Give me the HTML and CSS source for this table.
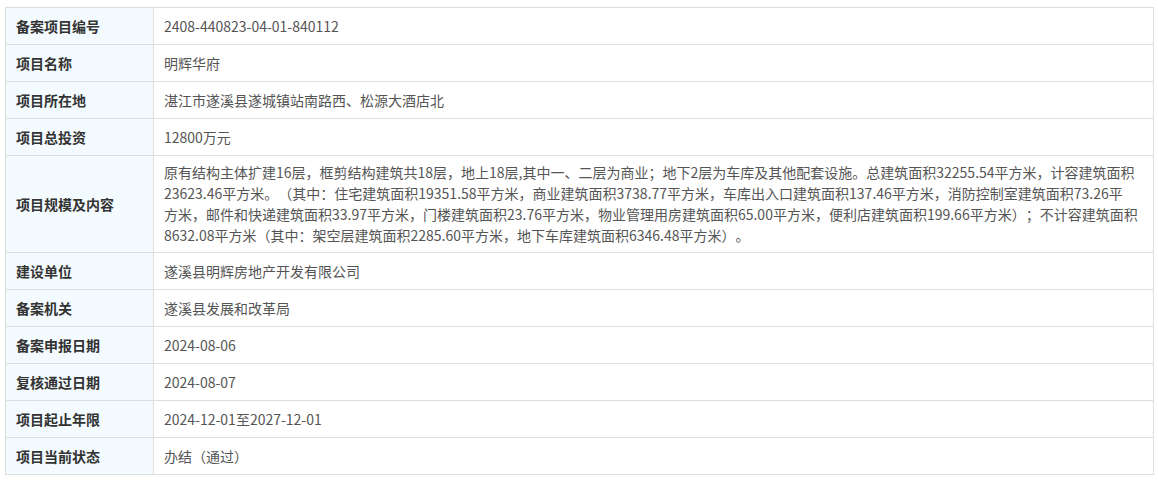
FILE: index.html
```html
<!DOCTYPE html>
<html lang="zh-CN">
<head>
    <meta charset="UTF-8">
    <meta name="viewport" content="width=device-width, initial-scale=1.0">
    <title>备案项目信息</title>
    <link rel="stylesheet" href="styles.css">
</head>
<body>

    <div class="wrap">
        <table class="info-table">
            <tr>
                <th>备案项目编号</th>
                <td>2408-440823-04-01-840112</td>
            </tr>
            <tr>
                <th>项目名称</th>
                <td>明辉华府</td>
            </tr>
            <tr>
                <th>项目所在地</th>
                <td>湛江市遂溪县遂城镇站南路西、松源大酒店北</td>
            </tr>
            <tr>
                <th>项目总投资</th>
                <td>12800万元</td>
            </tr>
            <tr>
                <th>项目规模及内容</th>
                <td class="long">原有结构主体扩建16层，框剪结构建筑共18层，地上18层,其中一、二层为商业；地下2层为车库及其他配套设施。总建筑面积32255.54平方米，计容建筑面积<br>23623.46平方米。（其中：住宅建筑面积19351.58平方米，商业建筑面积3738.77平方米，车库出入口建筑面积137.46平方米，消防控制室建筑面积73.26平<br>方米，邮件和快递建筑面积33.97平方米，门楼建筑面积23.76平方米，物业管理用房建筑面积65.00平方米，便利店建筑面积199.66平方米）；不计容建筑面积<br>8632.08平方米（其中：架空层建筑面积2285.60平方米，地下车库建筑面积6346.48平方米）。</td>
            </tr>
            <tr>
                <th>建设单位</th>
                <td>遂溪县明辉房地产开发有限公司</td>
            </tr>
            <tr>
                <th>备案机关</th>
                <td>遂溪县发展和改革局</td>
            </tr>
            <tr>
                <th>备案申报日期</th>
                <td>2024-08-06</td>
            </tr>
            <tr>
                <th>复核通过日期</th>
                <td>2024-08-07</td>
            </tr>
            <tr>
                <th>项目起止年限</th>
                <td>2024-12-01至2027-12-01</td>
            </tr>
            <tr>
                <th>项目当前状态</th>
                <td>办结（通过）</td>
            </tr>
        </table>
    </div>

</body>
</html>
```

FILE: styles.css
```css
body {
    font-family: "Noto Sans CJK SC", "Noto Sans", sans-serif;
    background-color: #ffffff;
    margin: 0;
    padding: 0;
}

.wrap {
    padding: 7px 5px;
}

.info-table {
    width: 1149px;
    border-collapse: collapse;
    font-size: 14px;
    line-height: 21px;
    text-spacing-trim: space-all;
}

.info-table th,
.info-table td {
    border: 1px solid #dedede;
    height: 37px;
    padding: 0 10px;
    box-sizing: border-box;
    text-align: left;
    vertical-align: middle;
}

.info-table th {
    width: 148px;
    background: #f3fbfe;
    color: #333;
    font-weight: bold;
}

.info-table td {
    color: #555;
}

.info-table td.long {
    padding: 6px 10px;
}
```
